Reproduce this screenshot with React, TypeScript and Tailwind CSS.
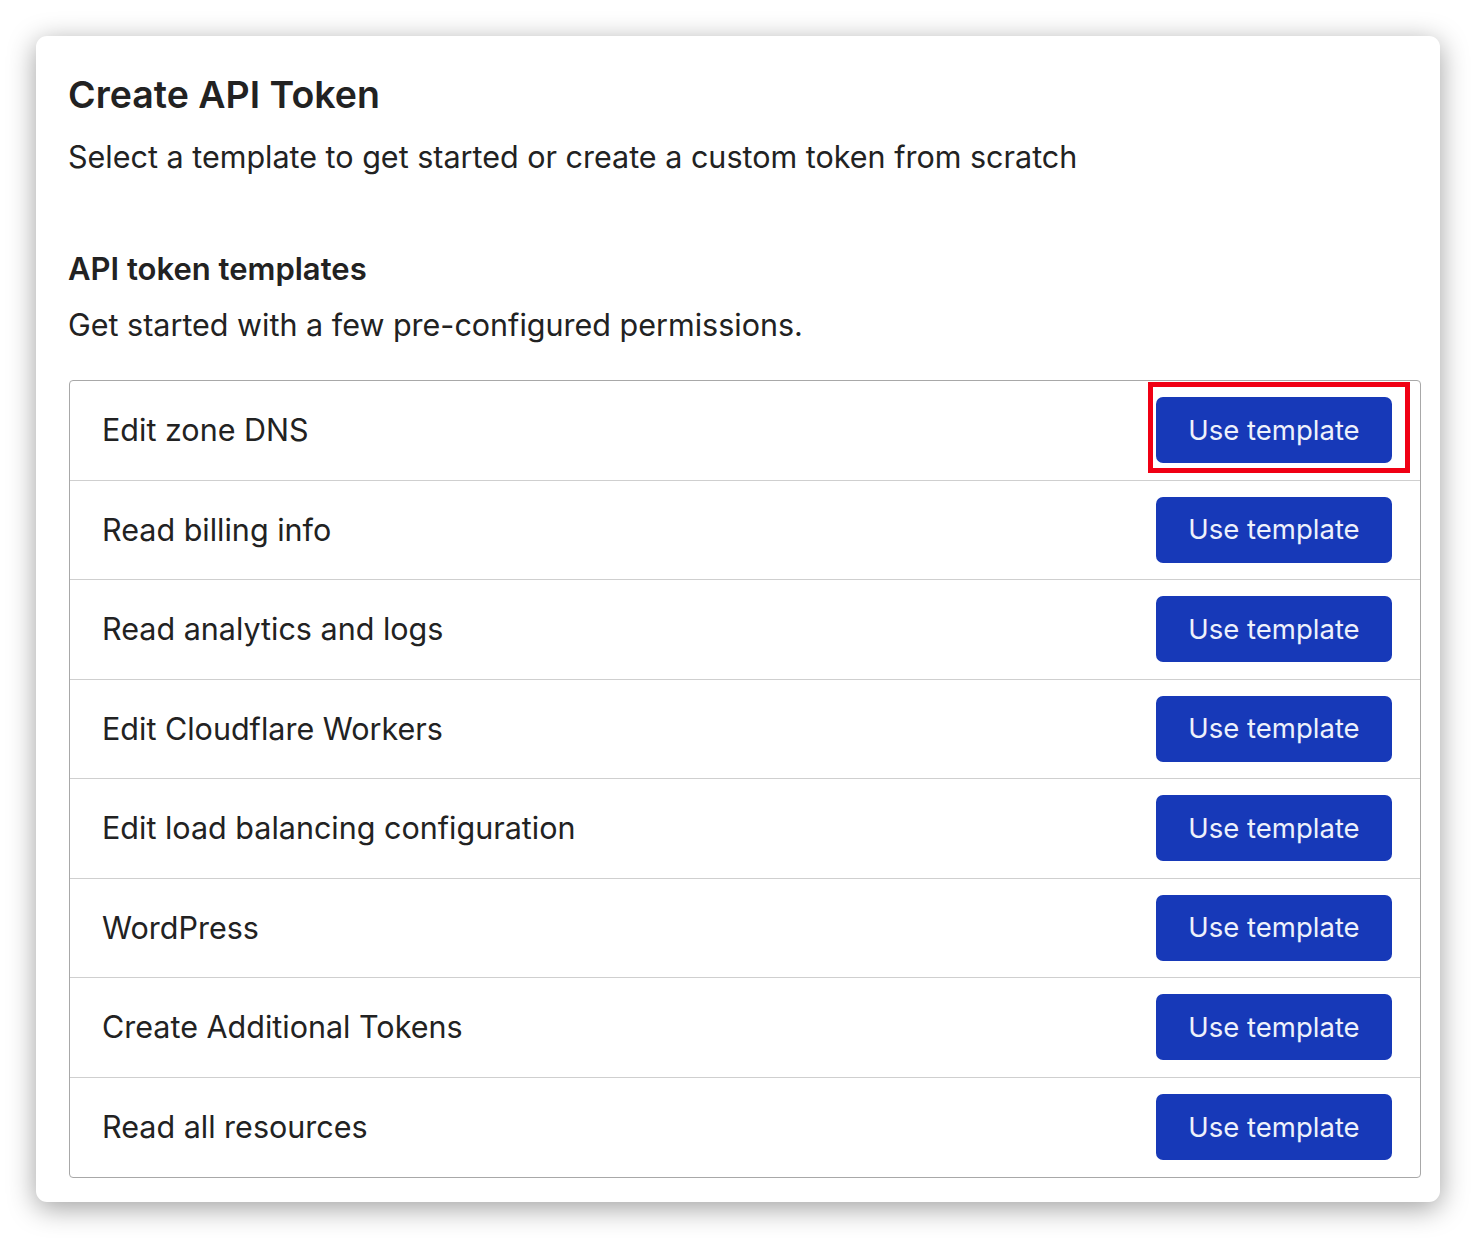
import { FC } from "react";

const templates = [
  "Edit zone DNS",
  "Read billing info",
  "Read analytics and logs",
  "Edit Cloudflare Workers",
  "Edit load balancing configuration",
  "WordPress",
  "Create Additional Tokens",
  "Read all resources",
];

const TemplateRow: FC<{ name: string; highlighted?: boolean; last?: boolean }> = ({
  name,
  highlighted,
  last,
}) => {
  return (
    <div
      className={
        "relative flex items-center justify-between h-[99.5px] pl-[32px] pr-[28px] " +
        (last ? "" : "border-b border-[#cfcfcf]")
      }
    >
      <span className="text-[30.5px] text-[#222222]">{name}</span>
      <button className="h-[66px] w-[236px] rounded-[7px] bg-[#1739b8] text-[27.5px] text-[#eef1fb]">
        Use template
      </button>
      {highlighted && (
        <div className="absolute left-[1078px] top-[1px] h-[91px] w-[262px] border-[5px] border-[#f00014]" />
      )}
    </div>
  );
};

const App: FC = () => {
  return (
    <div className="min-h-screen bg-white p-[36px] font-['Inter',sans-serif]">
      <div className="w-[1404px] h-[1166px] rounded-[11px] bg-white shadow-[0_6px_28px_rgba(0,0,0,0.38)] px-[33px] pt-[35px]">
        <h1 className="-ml-px text-[37.5px] font-semibold leading-[48px] text-[#222222]">Create API Token</h1>
        <p className="-ml-px mt-[18px] text-[30.5px] leading-[40px] text-[#222222]">
          Select a template to get started or create a custom token from scratch
        </p>
        <h2 className="-ml-px mt-[72px] text-[31px] font-semibold leading-[40px] text-[#222222]">
          API token templates
        </h2>
        <p className="-ml-px mt-[16px] text-[30.5px] leading-[40px] text-[#222222]">
          Get started with a few pre-configured permissions.
        </p>
        <div className="mt-[35px] w-[1352px] rounded-[4px] border border-[#a8a8a8]">
          {templates.map((t, i) => (
            <TemplateRow key={t} name={t} highlighted={i === 0} last={i === templates.length - 1} />
          ))}
        </div>
      </div>
    </div>
  );
};

export default App;
